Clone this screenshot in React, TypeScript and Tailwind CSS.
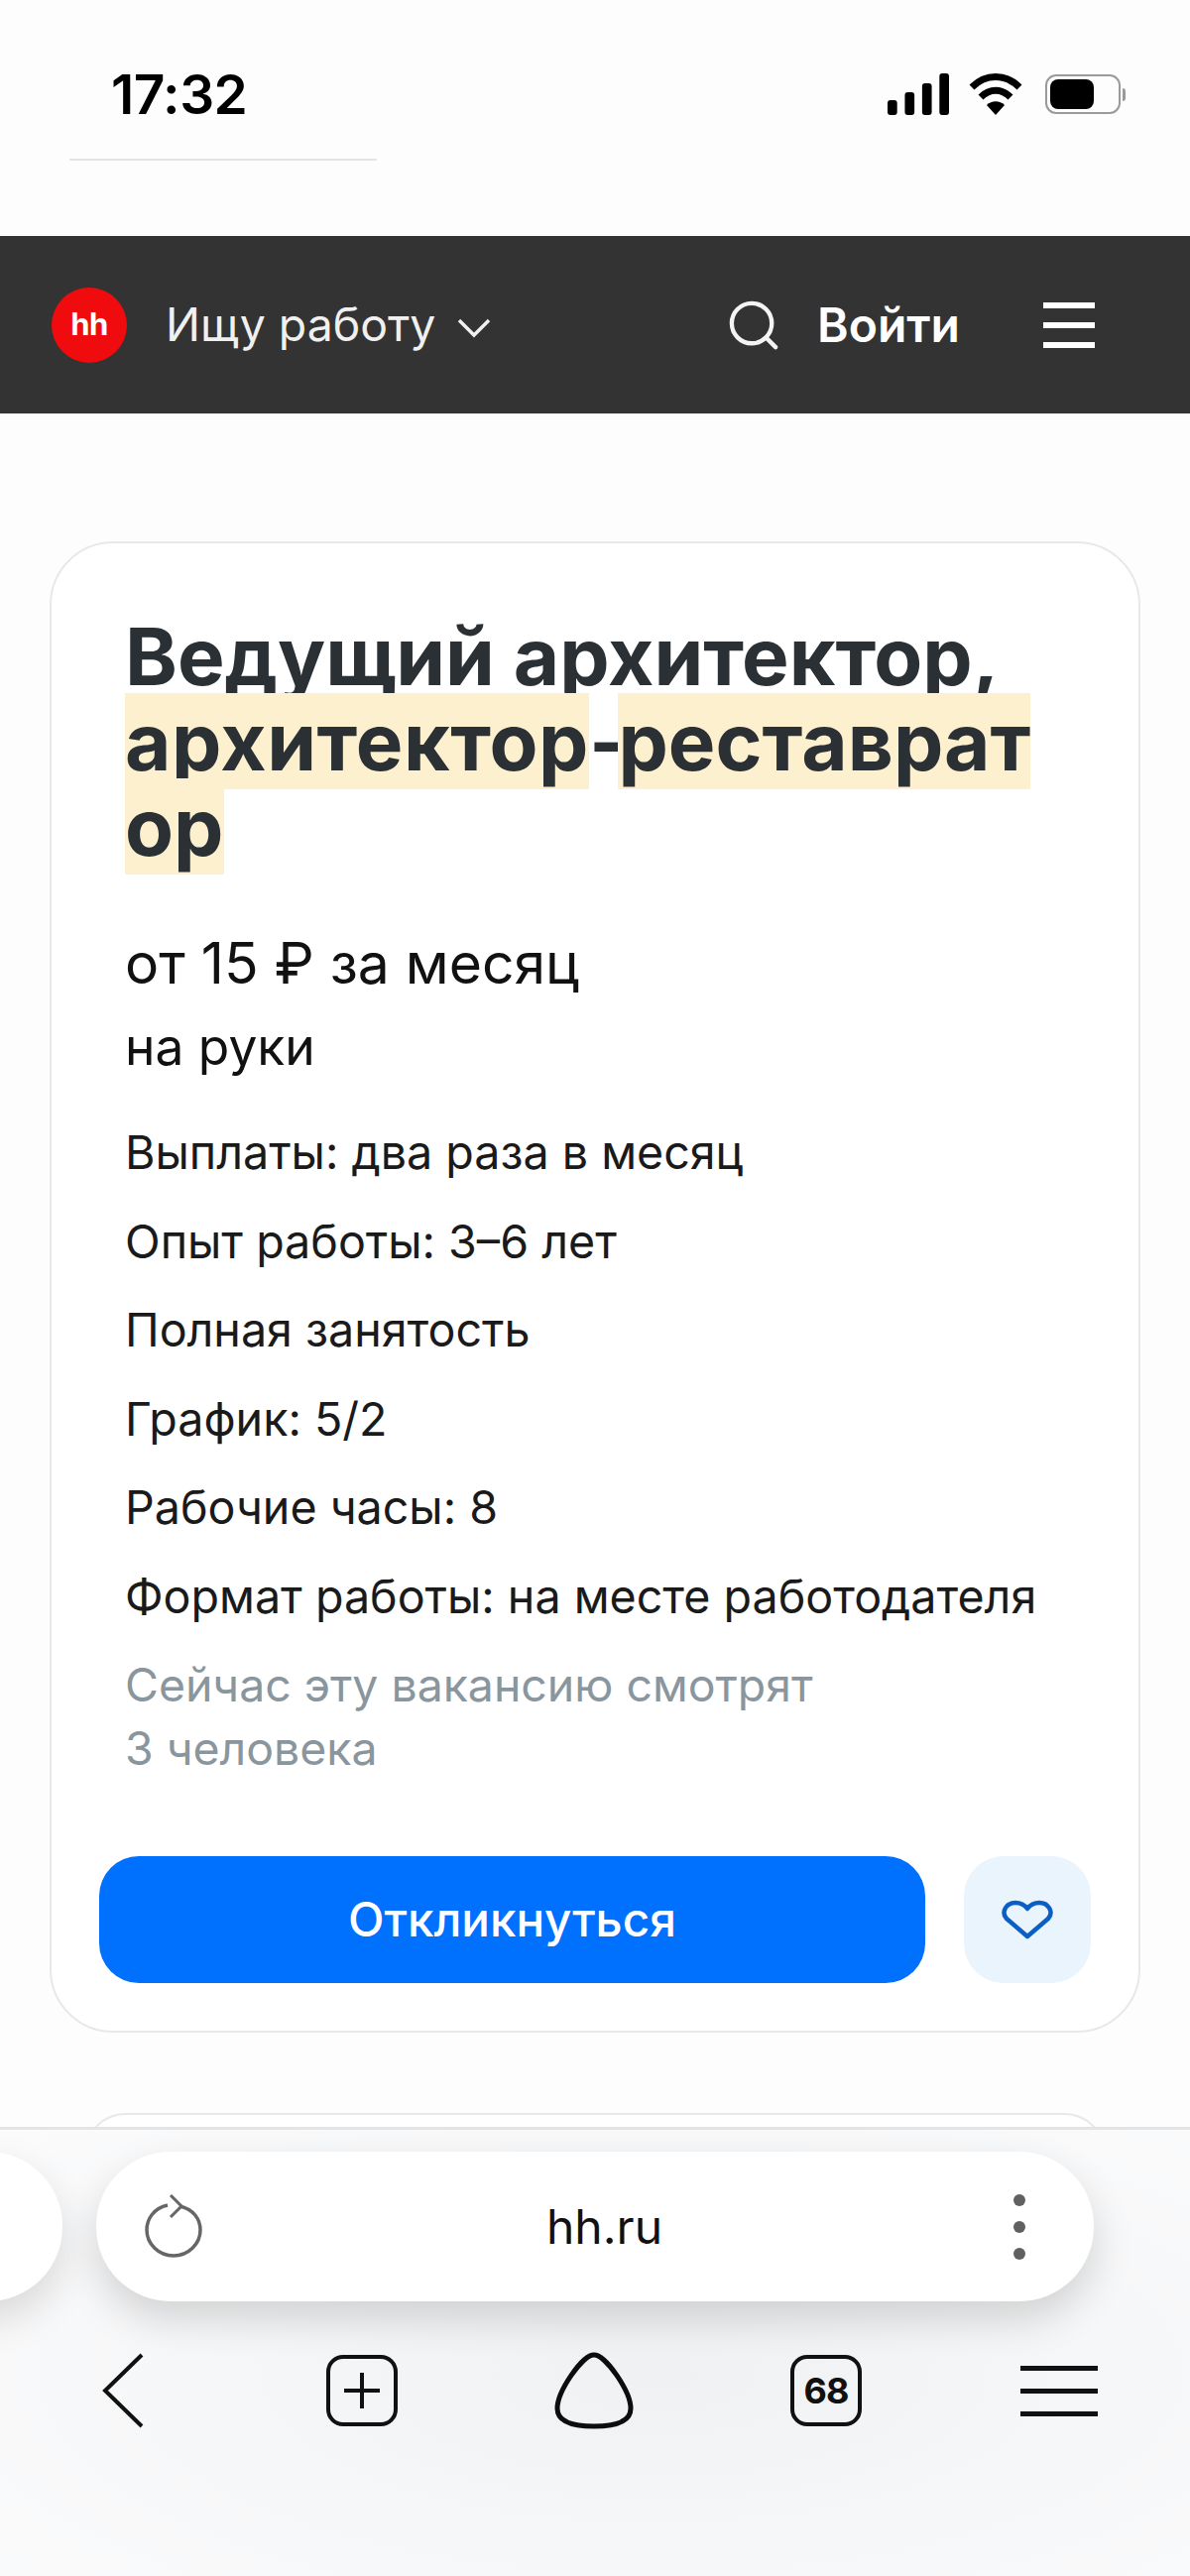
import React from "react";

const font = { fontFamily: "Inter, 'Noto Sans', sans-serif" };

function Signal() {
  return (
    <svg width="62" height="42" viewBox="0 0 64 42" fill="#000" preserveAspectRatio="none">
      <rect x="0" y="27" width="10" height="15" rx="3" />
      <rect x="18" y="19" width="10" height="23" rx="3" />
      <rect x="36" y="10" width="10" height="32" rx="3" />
      <rect x="54" y="0" width="10" height="42" rx="3" />
    </svg>
  );
}

function Wifi() {
  return (
    <svg width="54" height="42" viewBox="0 0 54 42" fill="none" stroke="#000" strokeWidth="7">
      <path d="M3 14 C17 0 37 0 51 14" />
      <path d="M12 24 C21 15 33 15 42 24" />
      <path d="M27 42 L18 32 C23 27 31 27 36 32 Z" fill="#000" stroke="none" />
    </svg>
  );
}

function Battery() {
  return (
    <div className="flex items-center">
      <div className="w-[76px] h-[40px] rounded-[11px] border-[2px] border-[#9a9a9a] p-[3px] flex">
        <div className="w-[44px] h-full rounded-[8px] bg-black" />
      </div>
      <div className="w-[3px] h-[13px] bg-[#9a9a9a] rounded-r-full ml-[2px]" />
    </div>
  );
}

function Row({ children }: { children: React.ReactNode }) {
  return <p className="text-[46.6px] leading-[64px] text-[#1a1a1a] mb-[25.5px]">{children}</p>;
}

export default function App() {
  return (
    <div className="w-[1200px] h-[2598px] flex flex-col overflow-hidden bg-[#fdfdfd]" style={font}>
      <div className="h-[160px] flex items-start justify-between pl-[112px] pr-[65px] pt-[62px] shrink-0">
        <span className="text-[55px] leading-[66px] font-semibold text-black tracking-[-0.5px]">17:32</span>
        <div className="flex items-center mt-[12px]">
          <Signal />
          <div className="ml-[20px]"><Wifi /></div>
          <div className="ml-[23px]"><Battery /></div>
        </div>
      </div>
      <div className="h-[2px] w-[310px] ml-[70px] bg-[#e4e4e4] shrink-0" />
      <div className="h-[76px] shrink-0" />

      <header className="h-[179px] shrink-0 bg-[#333333] flex items-center pl-[52px] pr-[96px] text-white">
        <div className="w-[76px] h-[76px] rounded-full bg-[#f00b0e] flex items-center justify-center text-[31px] font-bold tracking-[-0.5px]">
          hh
        </div>
        <span className="ml-[39px] text-[46.4px] leading-none text-[#f0f0f0]">Ищу работу</span>
        <svg className="ml-[22px] mt-[6px]" width="34" height="20" viewBox="0 0 34 20" fill="none" stroke="#f0f0f0" strokeWidth="3.5">
          <path d="M2 2 L17 17 L32 2" />
        </svg>
        <svg className="ml-auto" width="50" height="50" viewBox="0 0 52 52" fill="none" stroke="#f4f4f4" strokeWidth="4.5" strokeLinecap="round">
          <circle cx="24" cy="24" r="21" />
          <path d="M39 39 L49 49" />
        </svg>
        <span className="ml-[39px] text-[48px] leading-none font-semibold">Войти</span>
        <div className="ml-[84px] w-[52px] flex flex-col gap-[14px]">
          <div className="h-[6px] bg-white" />
          <div className="h-[6px] bg-white" />
          <div className="h-[6px] bg-white" />
        </div>
      </header>

      <main className="flex-1 min-h-0 overflow-hidden pt-[129px] px-[50px]">
        <section className="h-[1504px] rounded-[64px] border-[2px] border-[#e6e9eb] bg-white pt-[71px] pl-[74px] pr-[48px]">
          <h1 className="text-[80px] leading-[86px] font-bold text-[#2a3034] whitespace-nowrap">
            Ведущий архитектор,
            <br />
            <span className="bg-[#fdf0cf] tracking-[0.5px]">архитектор</span>
            <span className="tracking-[-8px]">-</span>
            <span className="bg-[#fdf0cf]">реставрат</span>
            <br />
            <span className="bg-[#fdf0cf]">ор</span>
          </h1>
          <p className="mt-[59px] text-[57px] leading-[72px] text-[#111]">от 15 ₽ за месяц</p>
          <p className="mt-[15px] text-[51.5px] leading-[64px] text-[#111]">на руки</p>
          <div className="mt-[43px]">
            <Row>Выплаты: два раза в месяц</Row>
            <Row>Опыт работы: 3–6 лет</Row>
            <Row>Полная занятость</Row>
            <Row>График: 5/2</Row>
            <Row>Рабочие часы: 8</Row>
            <Row>Формат работы: на месте работодателя</Row>
          </div>
          <p className="text-[46.4px] leading-[64px] text-[#8a969e]">
            Сейчас эту вакансию смотрят
            <br />3 человека
          </p>
          <div className="mt-[77px] -ml-[26px] flex gap-[39px]">
            <button className="w-[833px] h-[128px] rounded-[40px] bg-[#0070ff] text-white text-[47.6px] font-medium">
              Откликнуться
            </button>
            <button className="w-[128px] h-[128px] rounded-[40px] bg-[#eaf4fd] flex items-center justify-center">
              <svg width="52" height="40" viewBox="0 0 52 40" fill="none" stroke="#0b5fc4" strokeWidth="4.5" strokeLinejoin="round">
                <path d="M26 37 L5 19 C-1 12 5 3 14 3 C19 3 23 5 26 9 C29 5 33 3 38 3 C47 3 53 12 47 19 Z" />
              </svg>
            </button>
          </div>
        </section>
        <div className="mt-[81px] mx-[36px] h-[40px] rounded-t-[40px] border-[2px] border-[#e6e9eb] bg-white" />
      </main>

      <footer className="h-[453px] shrink-0 border-t-[3px] border-[#e4e4e4] bg-[radial-gradient(ellipse_at_55%_55%,#eff1f3_0%,#f6f7f8_50%,#fbfbfc_100%)] relative">
        <div className="flex gap-[34px] pt-[22px] -ml-[100px]">
          <div className="w-[163px] h-[151px] shrink-0 rounded-[75px] bg-white shadow-[0_18px_40px_rgba(0,0,0,0.13)]" />
          <div className="w-[1006px] h-[151px] shrink-0 rounded-[75px] bg-white shadow-[0_18px_40px_rgba(0,0,0,0.15)] flex items-center pl-[48px] pr-[69px]">
            <svg width="60" height="66" viewBox="0 0 60 66" fill="none" stroke="#666" strokeWidth="3.5">
              <path d="M24 11 C10 14 3 25 3 36 C3 50 15 62 30 62 C45 62 57 50 57 36 C57 25 50 15 36 12" />
              <path d="M27 1 L38 12 L27 23" strokeWidth="3" />
            </svg>
            <span className="flex-1 text-center text-[48px] leading-none text-[#111] -ml-[8px]">hh.ru</span>
            <div className="flex flex-col gap-[15px]">
              <div className="w-[12px] h-[12px] rounded-full bg-[#606060]" />
              <div className="w-[12px] h-[12px] rounded-full bg-[#606060]" />
              <div className="w-[12px] h-[12px] rounded-full bg-[#606060]" />
            </div>
          </div>
        </div>
        <div className="mt-[51px] pl-[6px] grid grid-cols-[236px_236px_236px_236px_236px] items-center justify-items-center">
          <svg width="44" height="76" viewBox="0 0 44 76" fill="none" stroke="#111" strokeWidth="4">
            <path d="M41 2 L4 38 L41 74" />
          </svg>
          <div className="ml-[10px] w-[72px] h-[72px] rounded-[17px] border-[4px] border-[#111] flex items-center justify-center">
            <svg width="36" height="36" viewBox="0 0 36 36" stroke="#111" strokeWidth="4">
              <path d="M18 0 V36 M0 18 H36" />
            </svg>
          </div>
          <svg className="ml-[6px]" width="80" height="78" viewBox="0 0 80 78" fill="none" stroke="#0d0d0d" strokeWidth="5">
            <path d="M40 3 C28 3 3 40 3 57 C3 72 22 75 40 75 C58 75 77 72 77 57 C77 40 52 3 40 3 Z" />
          </svg>
          <div className="ml-[2px] w-[72px] h-[72px] rounded-[17px] border-[4px] border-[#111] flex items-center justify-center text-[36px] font-bold text-[#111] tracking-[-1px]">
            68
          </div>
          <div className="w-[78px] flex flex-col gap-[18px]">
            <div className="h-[5px] bg-[#111]" />
            <div className="h-[5px] bg-[#111]" />
            <div className="h-[5px] bg-[#111]" />
          </div>
        </div>
      </footer>
    </div>
  );
}
